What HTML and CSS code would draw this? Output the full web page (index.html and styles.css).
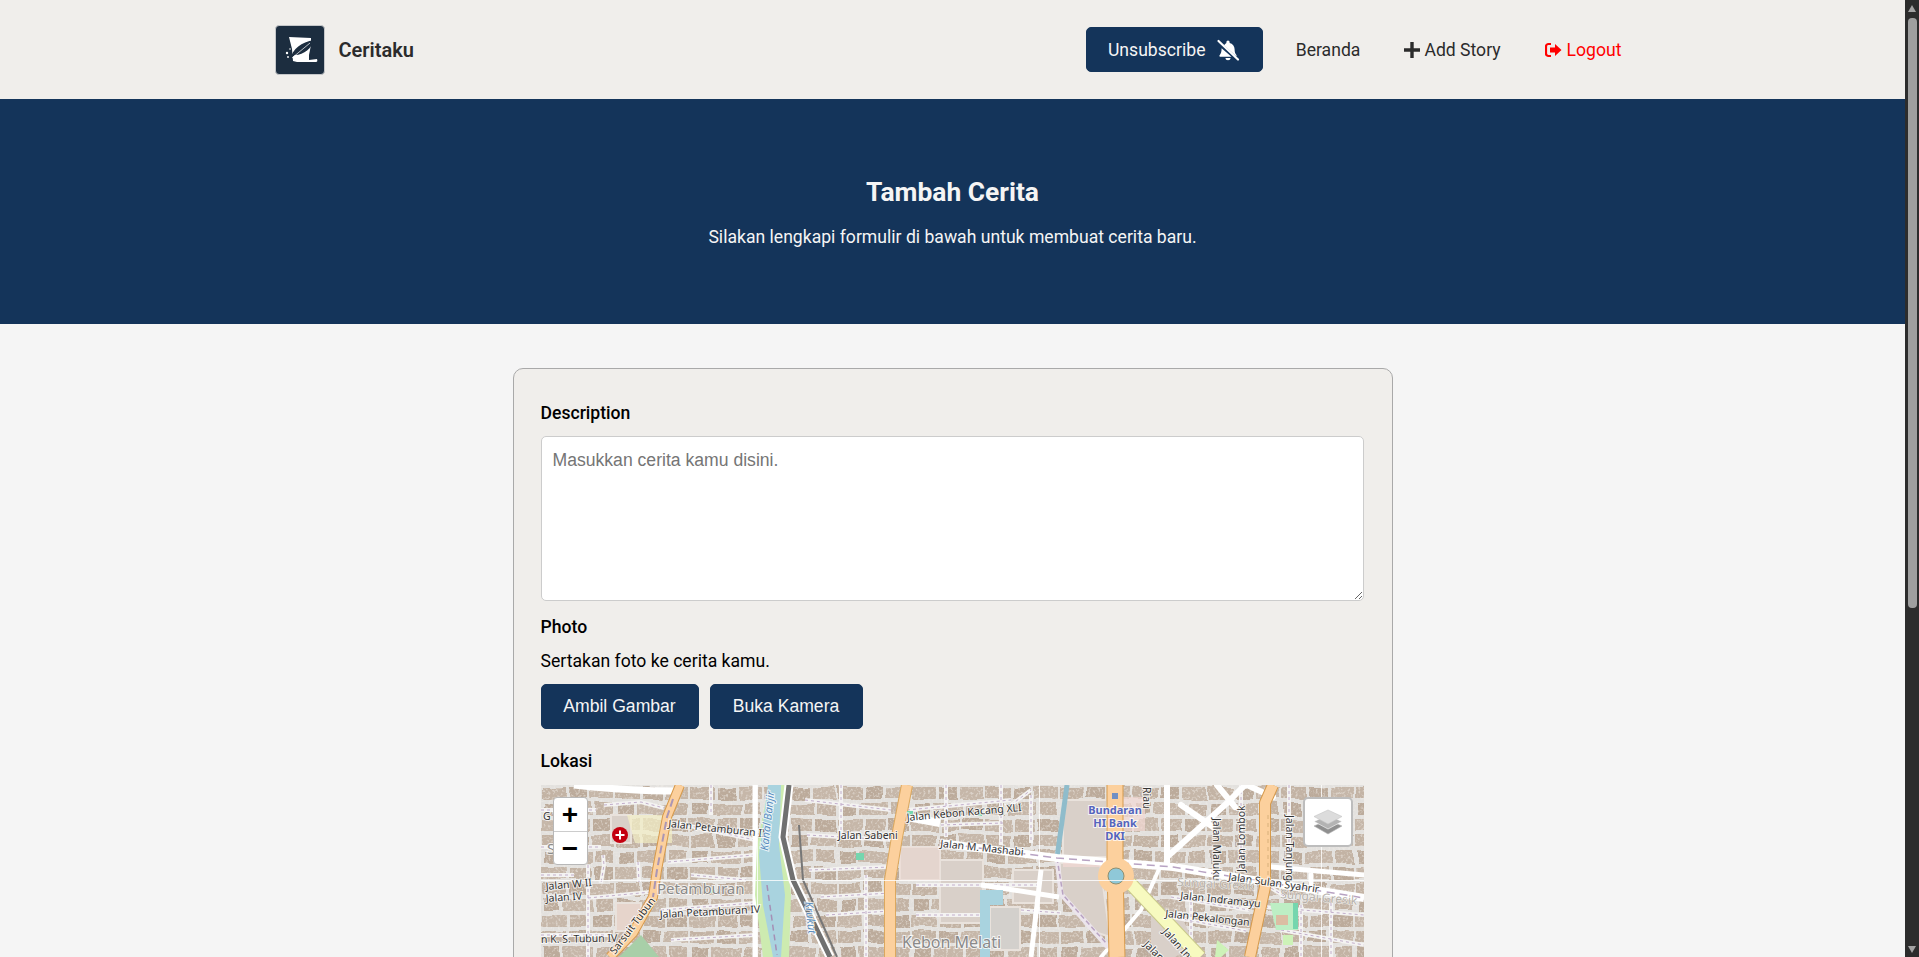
FILE: index.html
```html
<!DOCTYPE html>
<html lang="en">

<head>
  <meta charset="UTF-8">
  <meta name="viewport" content="width=device-width, initial-scale=1.0">
  <title>Ceritaku</title>
  <link rel="stylesheet" href="styles.css">
</head>

<body>
<div class="window">
  <div class="page">

    <header class="site_header">
      <div class="header_inner">
        <a class="brand" href="#">
          <span class="brand_logo">
            <svg viewBox="0 0 50 50" width="50" height="50">
              <path d="M14 12 L36 13 L36 20 L34 30 L34 35 L42 34 Q43 37 41 37 L22 37 L18 36 L17 24 Z" fill="#fff"/>
              <path d="M15 34 C18 24 26 17 39 15 C37 23 29 30 20 30 Z" fill="#1c2d3f"/>
              <path d="M17 33 L35 18" stroke="#fff" stroke-width=".7"/>
              <circle cx="12" cy="28" r="1.200" fill="#fff"/>
              <circle cx="15" cy="24" r=".8" fill="#fff"/>
              <circle cx="13" cy="32" r=".9" fill="#fff"/>
            </svg>
          </span>
          <span class="brand_name">Ceritaku</span>
        </a>

        <nav class="nav">
          <button class="btn nav_btn">
            Unsubscribe
            <svg class="bell_icon" viewBox="0 0 24 24" width="24" height="24">
              <path d="M12 2.500a1.600 1.600 0 0 1 1.600 1.600v.8c3 .7 5 3.300 5 6.400 0 2.600.5 4.400 2 6l-.2 1.200L8 7.300C8.800 6.100 9.500 5.400 10.400 4.900v-.8A1.600 1.600 0 0 1 12 2.500z" fill="#fff"/>
              <path d="M5.600 10.200 15.500 18.700H4.200c-.8 0-1.100-.9-.6-1.500 1.300-1.400 2-3.400 2-7z" fill="#fff"/>
              <path d="M9.500 20h5c0 1.300-1.100 2.300-2.500 2.300S9.500 21.300 9.500 20z" fill="#fff"/>
              <path d="M2.500 3 22 21.500" stroke="#fff" stroke-width="2.200" stroke-linecap="round"/>
            </svg>
          </button>
          <a class="nav_link" href="#">Beranda</a>
          <a class="nav_link" href="#">
            <svg class="link_icon" viewBox="0 0 16 16" width="16" height="16">
              <path d="M6.300 0h3.400v6.300H16v3.400H9.700V16H6.300V9.700H0V6.300h6.300z" fill="#2b2b2b"/>
            </svg>
            Add Story
          </a>
          <a class="nav_link logout" href="#">
            <svg class="link_icon" viewBox="0 0 17 16" width="17" height="16">
              <path d="M6 2H3.500A2.500 2.500 0 0 0 1 4.500v7A2.500 2.500 0 0 0 3.500 14H6" fill="none" stroke="#f00" stroke-width="2.200"/>
              <path d="M10 2l6.500 6-6.500 6v-3.500H5v-5h5z" fill="#f00"/>
            </svg>
            Logout
          </a>
        </nav>
      </div>
    </header>

    <section class="hero">
      <h1>Tambah Cerita</h1>
      <p>Silakan lengkapi formulir di bawah untuk membuat cerita baru.</p>
    </section>

    <main class="content">
      <form class="story_card">
        <label class="field_label" for="description">Description</label>
        <textarea id="description" class="description_input" placeholder="Masukkan cerita kamu disini."></textarea>

        <div class="field_label photo_label">Photo</div>
        <p class="field_hint">Sertakan foto ke cerita kamu.</p>
        <div class="photo_buttons">
          <button type="button" class="btn btn_ambil">Ambil Gambar</button>
          <button type="button" class="btn btn_kamera">Buka Kamera</button>
        </div>

        <div class="field_label lokasi_label">Lokasi</div>
        <div class="map">
          <svg class="map_tiles" viewBox="0 0 823 172" width="823" height="172">
            <defs>
              <pattern id="houses" width="74" height="48" patternUnits="userSpaceOnUse">
                <rect width="74" height="48" fill="#e3e1de"/>
                <rect x="1" y="2" width="24" height="12" fill="#c3b3a4"/>
                <rect x="28" y="2" width="18" height="12" fill="#bcab9b"/>
                <rect x="49" y="2" width="24" height="12" fill="#c6b7a9"/>
                <rect x="3" y="18" width="16" height="12" fill="#bcab9b"/>
                <rect x="22" y="18" width="30" height="12" fill="#c6b7a9"/>
                <rect x="55" y="18" width="17" height="12" fill="#c3b3a4"/>
                <rect x="0" y="34" width="26" height="12" fill="#c6b7a9"/>
                <rect x="29" y="34" width="20" height="12" fill="#c3b3a4"/>
                <rect x="52" y="34" width="20" height="12" fill="#bcab9b"/>
              </pattern>
              <filter id="wobble" x="0" y="0" width="100%" height="100%">
                <feTurbulence type="fractalNoise" baseFrequency=".035" numOctaves="2" seed="4"/>
                <feDisplacementMap in="SourceGraphic" scale="7"/>
                <feGaussianBlur stdDeviation=".5"/>
              </filter>
              <filter id="grain" x="0" y="0" width="100%" height="100%">
                <feTurbulence type="fractalNoise" baseFrequency=".4" numOctaves="2" seed="9"/>
                <feColorMatrix values="0 0 0 0 .88 0 0 0 0 .85 0 0 0 0 .81 4 0 0 0 -2"/>
                <feGaussianBlur stdDeviation=".4"/>
              </filter>
              <filter id="soft" x="0" y="0" width="100%" height="100%">
                <feGaussianBlur stdDeviation=".35"/>
              </filter>
              <g id="gang_paths">
                <path d="M63 20 100 17 123 23M0 25H55M0 62H60M0 90H33M47 80V172M47 113 110 107M0 150H70M62 70 63 80 60 98M97 77 98 97"/>
                <path d="M127 77 213 70M135 38 214 55M120 125 214 118M130 155 214 150M150 90 205 95M170 0V30"/>
                <path d="M264 15 350 25M266 50 352 55M268 85 350 82M280 112 350 108M285 130 350 126M300 0V50M325 90V172"/>
                <path d="M366 25 470 15M400 40 462 38M405 0V52M460 0V60M470 20l20-15M490 10V58"/>
                <path d="M375 100H500M375 130H440M480 125 520 128"/>
                <path d="M700 0V85M748 0V92M700 120 823 130M740 145 823 160M725 100l20 12M790 118V172M760 120V172"/>
                <path d="M630 112 708 125M620 130 705 146M650 105V172"/>
              </g>
            </defs>

            <g filter="url(#wobble)">
              <rect x="-10" y="-10" width="843" height="192" fill="url(#houses)"/>
            </g>
            <rect width="823" height="172" filter="url(#grain)" opacity=".5"/>

            <g filter="url(#soft)">
              <!-- komersial -->
              <g fill="#d9d0c9" stroke="#e9e2dc" stroke-width="2">
                <path d="M359 62h40v33h-40zM399 75h43v63h-43zM522 15h44v57h-44zM472 85h40v33h-40z"/>
                <path d="M519 78h40l10 74-18-6-32-38z"/>
                <path d="M449 122h30v43h-30z" fill="#d3d0cc"/>
                <path d="M70 30h20v28H70z"/>
                <path d="M75 118h25v28H75z" fill="#e6d4cb"/>
              </g>
              <path d="M86 30h45v28H94z" fill="#f3efc6" opacity=".7"/>
              <path d="M359 62h40v33h-40z" fill="#f0d9d4" opacity=".5"/>
              <path d="M522 74h44v8h-44zM582 12h22v34h-22z" fill="#f2d8d4" opacity=".7"/>
              <path d="M610 130h30l14 30-20 12h-24z" fill="#d9d0c9"/>
              <path d="M78 172 100 150 118 172z" fill="#a8cfa8"/>

              <!-- gang -->
              <use href="#gang_paths" fill="none" stroke="#f4f3f2" stroke-width="4"/>
              <use href="#gang_paths" fill="none" stroke="#c2aecb" stroke-width="1" stroke-dasharray="3 3"/>
              <path d="M33 0Q90 6 133 6" fill="none" stroke="#fff" stroke-width="7"/>

              <!-- jalan putih besar -->
              <g fill="none" stroke="#fff" stroke-width="6" stroke-linecap="round">
                <path d="M626 0V82"/>
                <path d="M626 72 686 18 704 0"/>
                <path d="M640 20 672 42M676 0l18 22M706 0l26 12"/>
                <path d="M770 90V100M730 82l93 8" stroke-width="5"/>
                <path d="M618 84 600 125 560 172" stroke-width="4"/>
                <path d="M516 73l4 36 46 52" stroke="#ece5ec" stroke-width="5"/>
              </g>
              <g fill="none" stroke="#fff" stroke-width="5">
                <path d="M214 0V172"/>
                <path d="M500 85 490 172M440 100 518 112"/>
              </g>

              <!-- kali -->
              <path d="M216 60 228 0H246L244 60 250 110 248 172H222L214 110Z" fill="#cdebb0"/>
              <path d="M227 0H240L238 60 244 110 240 172H232L222 120 218 70Z" fill="#a9d3df"/>
              <path d="M226 100 236 170" stroke="#a58fb5" stroke-width="1.500" stroke-dasharray="6 4" fill="none"/>
              <path d="M526 0 516 73" stroke="#8fbccb" stroke-width="5" fill="none"/>
              <path d="M439 105h23v15h-13v52h-10z" fill="#a9d3df"/>
              <path d="M516 73 522 110 565 158" stroke="#b9a3c2" stroke-width="1.500" stroke-dasharray="5 3" fill="none"/>

              <!-- rel -->
              <path d="M248 0 242 52 252 95 289 172" fill="none" stroke="#fff" stroke-width="9"/>
              <path d="M248 0 242 52 252 95 289 172" fill="none" stroke="#6f6f6f" stroke-width="5"/>
              <path d="M258 40 262 95 296 172" fill="none" stroke="#777" stroke-width="2"/>

              <!-- jalan utama -->
              <g fill="none" stroke-linejoin="round">
                <path d="M366 32 399 38M399 58 516 73 632 82 823 113" stroke="#fff" stroke-width="8"/>
                <path d="M399 58 516 73 632 82 823 113" stroke="#b8a3c3" stroke-width="1.500" stroke-dasharray="8 5"/>
                <path d="M589 98 659 172" stroke="#c9c98a" stroke-width="14"/>
                <path d="M589 98 659 172" stroke="#f7fabf" stroke-width="12"/>
                <path d="M139 0 126 32 116 85 112 112 92 148 69 172" stroke="#d69a4c" stroke-width="10"/>
                <path d="M139 0 126 32 116 85 112 112 92 148 69 172" stroke="#fcd09d" stroke-width="8"/>
                <path d="M132 14 126 32 116 85 112 112" stroke="#ab96b4" stroke-width="2" stroke-dasharray="8 4"/>
                <path d="M366 0 356 52 349 95 349 172" stroke="#dba85f" stroke-width="12"/>
                <path d="M366 0 356 52 349 95 349 172" stroke="#fcd09d" stroke-width="10"/>
                <path d="M574 0 574 82 576 172" stroke="#d69a4c" stroke-width="17"/>
                <path d="M574 0 574 82 576 172" stroke="#fcd09d" stroke-width="15"/>
                <path d="M732 0 724 18 724 102 709 172" stroke="#d69a4c" stroke-width="12"/>
                <path d="M732 0 724 18 724 102 709 172" stroke="#fcd09d" stroke-width="10"/>
                <path d="M727 30V95" stroke="#d8b07a" stroke-width="1" stroke-dasharray="4 4"/>
              </g>
              <circle cx="575" cy="91" r="18" fill="#fcd09d"/>
              <circle cx="575" cy="91" r="8" fill="#8fc8d8" stroke="#8f8f70"/>
              <rect x="571" y="8" width="6" height="6" fill="#6f8fc4"/>

              <!-- taman -->
              <path d="M729 118h28v27h-22z" fill="#bdeec4"/>
              <path d="M752 118h5v26h-5z" fill="#74d6ae"/>
              <path d="M735 130h12v10h-12z" fill="#ef9d8d" opacity=".6"/>
              <path d="M742 150h10v10h-10zM676 155l12 10-8 7h-6z" fill="#cdf2b8"/>
              <path d="M315 68h8v7h-8zM366 26h6v5h-6zM437 26h4v5h-4zM170 105h4v3h-4z" fill="#74d6ae"/>
            </g>

            <!-- sambungan tile -->
            <path d="M0 95.500H823M216.500 0V172M498.500 0V172M780.500 0V172" stroke="#fff" stroke-width="1" opacity=".8"/>

            <!-- nama jalan -->
            <g class="map_label">
              <text x="127" y="42" transform="rotate(6 127 42)">Jalan Petamburan II</text>
              <text x="297" y="54">Jalan Sabeni</text>
              <text x="366" y="36" transform="rotate(-5 366 36)">Jalan Kebon Kacang XLI</text>
              <text x="5" y="105" transform="rotate(-5 5 105)">Jalan W II</text>
              <text x="5" y="117" transform="rotate(-4 5 117)">Jalan IV</text>
              <text x="0" y="158" transform="rotate(-1 0 158)">n K. S. Tubun IV</text>
              <text x="119" y="133" transform="rotate(-3 119 133)">Jalan Petamburan IV</text>
              <text x="74" y="170" transform="rotate(-53 74 170)">Sarsuit Tubun</text>
              <text x="2" y="35">G V</text>
              <text x="399" y="62" transform="rotate(6 399 62)">Jalan M. Mashabi</text>
              <text x="687" y="95" transform="rotate(8 687 95)">Jalan Sulan Syahrir</text>
              <text x="672" y="33" transform="rotate(90 672 33)">Jalan Maluku</text>
              <text x="704" y="87" transform="rotate(-90 704 87)">Jalan Lombok</text>
              <text x="745" y="30" transform="rotate(90 745 30)">Jalan Tanjung</text>
              <text x="602" y="2" transform="rotate(90 602 2)">Riau</text>
              <text x="639" y="114" transform="rotate(6 639 114)">Jalan Indramayu</text>
              <text x="624" y="132" transform="rotate(6 624 132)">Jalan Pekalongan</text>
              <text x="621" y="147" transform="rotate(48 621 147)">Jalan In</text>
              <text x="602" y="160" transform="rotate(45 602 160)">Jalan</text>
            </g>
            <g class="map_label place_label">
              <text x="116" y="109">Petamburan</text>
              <text x="361" y="163" class="place_big">Kebon Melati</text>
              <text x="6" y="69">S</text>
            </g>
            <g class="map_label river_label">
              <text x="227" y="66" transform="rotate(-84 227 66)">Kanal Banjir</text>
              <text x="264" y="117" transform="rotate(84 264 117)">Krukut</text>
            </g>
            <g class="map_label faded_label">
              <text x="636" y="101" transform="rotate(3 636 101)">Sungai Gresik</text>
              <text x="739" y="113" transform="rotate(5 739 113)">Sungai Gresik</text>
            </g>
            <g class="map_label transit_label">
              <text x="574" y="29">Bundaran</text>
              <text x="574" y="42">HI Bank</text>
              <text x="574" y="55">DKI</text>
            </g>

            <circle cx="79" cy="50" r="8" fill="#c4000f"/>
            <path d="M78 45.500h2v3.500h3.500v2H80v3.500h-2V51h-3.500v-2H78z" fill="#fff"/>
          </svg>

          <div class="zoom_control">
            <a class="zoom_btn" href="#">+</a>
            <a class="zoom_btn" href="#">&#8722;</a>
          </div>
          <div class="layers_control">
            <svg viewBox="0 0 30 26" width="30" height="26">
              <path d="M15 11 29 17 15 25 1 17Z" fill="#8f8f8f" stroke="#b5b5b5" stroke-width=".6"/>
              <path d="M15 6 29 12.500 15 20 1 12.500Z" fill="#b3b3b3" stroke="#fff" stroke-width=".6"/>
              <path d="M15 1 29 7.500 15 15 1 7.500Z" fill="#dcdcdc" stroke="#c4c4c4" stroke-width=".6"/>
            </svg>
          </div>
        </div>
      </form>
    </main>
  </div>

  <div class="scrollbar">
    <span class="scroll_arrow"></span>
    <div class="scroll_thumb"></div>
    <span class="scroll_arrow_down"></span>
  </div>
</div>
</body>

</html>
```

FILE: styles.css
```css
* {
    box-sizing: border-box;
}

body {
    margin: 0;
    height: 957px;
    overflow: hidden;
    font-family: Roboto, sans-serif;
    background-color: #f5f5f5;
    color: #000;
}

.window {
    display: flex;
    height: 957px;
}

.page {
    flex: 1;
    min-width: 0;
    overflow: hidden;
}

.scrollbar {
    width: 14px;
    background-color: #2c2c2c;
    display: flex;
    flex-direction: column;
    align-items: center;
    padding: 5px 0 4px;
}

.scroll_arrow {
    width: 0;
    height: 0;
    border-left: 4px solid transparent;
    border-right: 4px solid transparent;
    border-bottom: 7px solid #a3a3a3;
}

.scroll_arrow_down {
    width: 0;
    height: 0;
    margin-top: auto;
    border-left: 4.5px solid transparent;
    border-right: 4.5px solid transparent;
    border-top: 7px solid #a3a3a3;
}

.scroll_thumb {
    width: 9px;
    height: 590px;
    margin-top: 6px;
    border-radius: 4px;
    background-color: #9f9f9f;
}

.site_header {
    height: 99px;
    background-color: #f0eeeb;
}

.header_inner {
    width: 1354px;
    height: 100%;
    margin: 0 auto;
    display: flex;
    align-items: center;
    justify-content: space-between;
}

.brand {
    display: flex;
    align-items: center;
    gap: 14px;
    margin-left: -1px;
    text-decoration: none;
}

.brand_logo {
    display: block;
    width: 50px;
    height: 50px;
    border-radius: 4px;
    background-color: #1c2d3f;
    border: 1px solid #c5c7c9;
    overflow: hidden;
}

.brand_logo svg {
    display: block;
    margin: -1px;
}

.brand_name {
    font-size: 20px;
    font-weight: 600;
    color: #2b2b2b;
}

.nav {
    display: flex;
    align-items: center;
    gap: 44px;
    padding-right: 8px;
}

.btn {
    height: 45px;
    border: 1px solid #14345a;
    border-radius: 5px;
    background-color: #14345a;
    color: #f5f5f5;
    font-family: "Liberation Sans", Arial, sans-serif;
    font-size: 17.6px;
}

.nav_btn {
    display: flex;
    align-items: center;
    justify-content: center;
    gap: 11px;
    width: 177px;
    margin-right: -11px;
    font-family: Roboto, sans-serif;
}

.nav_link {
    display: flex;
    align-items: center;
    gap: 4px;
    font-size: 17.6px;
    color: #2b2b2b;
    text-decoration: none;
}

.logout {
    gap: 5px;
    color: #f00;
}

.hero {
    height: 225px;
    background-color: #14345a;
    color: #f5f5f5;
    text-align: center;
    padding-top: 77px;
}

.hero h1 {
    margin: 0;
    font-size: 26.4px;
    line-height: 32px;
    font-weight: 700;
}

.hero p {
    margin: 15px 0 0;
    font-size: 17.6px;
    line-height: 28px;
}

.content {
    padding-top: 44px;
}

.story_card {
    width: 880px;
    margin: 0 auto;
    padding: 32px 28px 28px 27px;
    border: 1px solid #a9a9a9;
    border-radius: 10px;
    background-color: #f0eeeb;
}

.field_label {
    display: block;
    height: 24px;
    font-size: 17.6px;
    line-height: 24px;
    font-weight: 500;
}

.description_input {
    display: block;
    width: 823px;
    height: 165px;
    margin-top: 11px;
    padding: 13px 11px;
    border: 1px solid #ccc;
    border-radius: 5px;
    background-color: #fff;
    font-family: "Liberation Sans", Arial, sans-serif;
    font-size: 17.6px;
}

.description_input::placeholder {
    color: #757575;
}

.photo_label {
    margin-top: 14px;
}

.field_hint {
    margin: 10px 0 0;
    font-size: 17.6px;
    line-height: 24px;
}

.photo_buttons {
    display: flex;
    gap: 11px;
    margin-top: 11px;
}

.btn_ambil {
    width: 158px;
}

.btn_kamera {
    width: 153px;
}

.lokasi_label {
    margin-top: 20px;
}

.map {
    position: relative;
    width: 823px;
    height: 172px;
    margin-top: 12px;
    overflow: hidden;
}

.map_tiles {
    display: block;
}

.map_label text {
    font-family: "Noto Sans", sans-serif;
    font-size: 10.5px;
    fill: #333;
    stroke: #fff;
    stroke-width: 2px;
    stroke-opacity: .75;
    paint-order: stroke;
}

.map_label .place_big {
    font-size: 16px;
}

.place_label text {
    font-size: 15px;
    fill: #8a8a8a;
}

.river_label text {
    font-size: 11px;
    font-style: italic;
    fill: #5a8ec0;
}

.faded_label text {
    font-size: 12px;
    fill: #b5b0aa;
    stroke-width: 1px;
}

.transit_label text {
    font-size: 11px;
    font-weight: 700;
    fill: #5565bd;
    text-anchor: middle;
}

.zoom_control {
    position: absolute;
    top: 12px;
    left: 12px;
    width: 35px;
    border: 1px solid #b8b8b8;
    border-radius: 4px;
    background-color: #fff;
}

.zoom_btn {
    display: block;
    height: 33px;
    font-family: "Liberation Sans", Arial, sans-serif;
    font-size: 28px;
    font-weight: 700;
    line-height: 33px;
    text-align: center;
    color: #000;
    text-decoration: none;
}

.zoom_btn + .zoom_btn {
    border-top: 1px solid #ccc;
}

.layers_control {
    position: absolute;
    top: 12px;
    right: 11px;
    width: 50px;
    height: 50px;
    display: flex;
    align-items: center;
    justify-content: center;
    border: 2px solid #bdbdbd;
    border-radius: 5px;
    background-color: #fff;
}
```
